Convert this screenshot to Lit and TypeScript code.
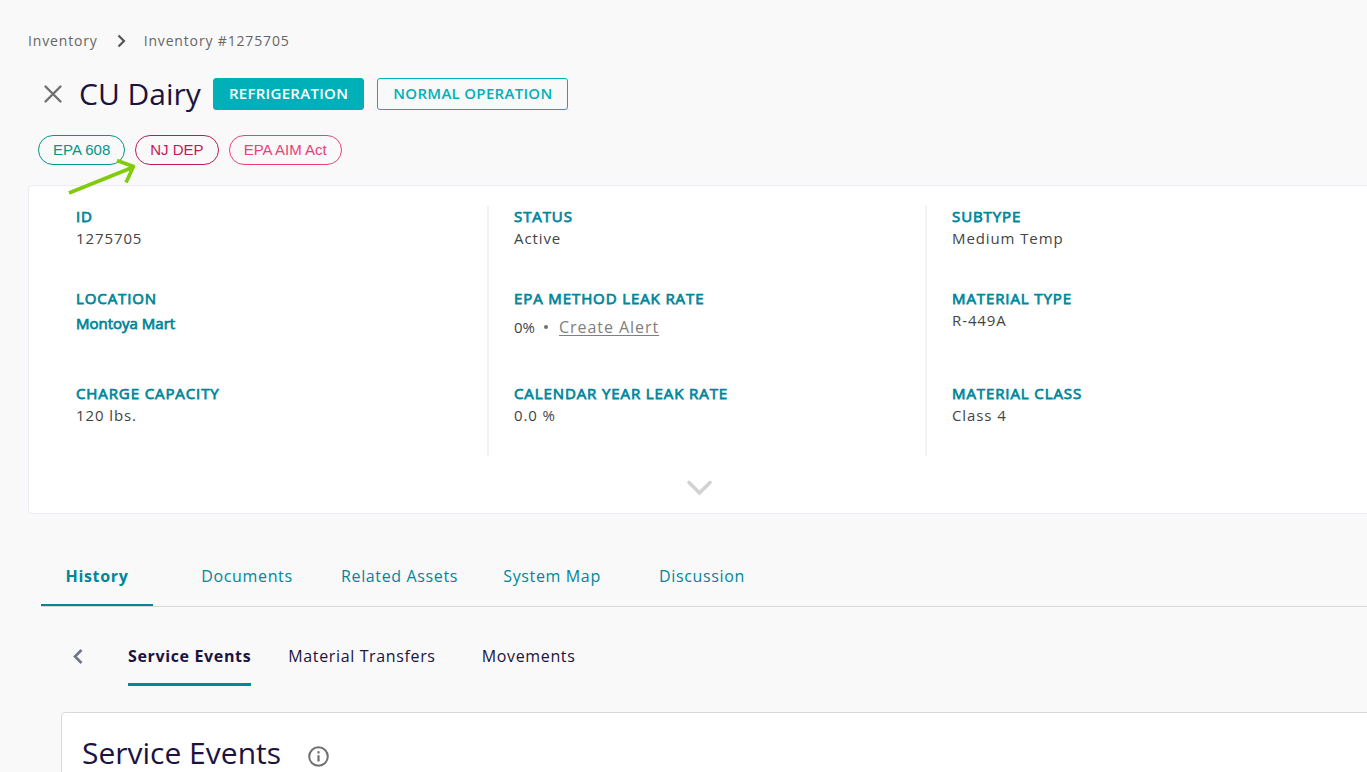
import { LitElement, html, css } from "lit";
import { customElement, state } from "lit/decorators.js";

interface Field {
  label: string;
  value: string;
  kind?: "link" | "rate";
}

const FIELDS: Field[] = [
  { label: "ID", value: "1275705" },
  { label: "STATUS", value: "Active" },
  { label: "SUBTYPE", value: "Medium Temp" },
  { label: "LOCATION", value: "Montoya Mart", kind: "link" },
  { label: "EPA METHOD LEAK RATE", value: "0%", kind: "rate" },
  { label: "MATERIAL TYPE", value: "R-449A" },
  { label: "CHARGE CAPACITY", value: "120 lbs." },
  { label: "CALENDAR YEAR LEAK RATE", value: "0.0 %" },
  { label: "MATERIAL CLASS", value: "Class 4" },
];

const TABS = ["History", "Documents", "Related Assets", "System Map", "Discussion"];
const SUBTABS = ["Service Events", "Material Transfers", "Movements"];

@customElement("asset-details")
class AssetDetails extends LitElement {
  static styles = css`
    :host {
      display: block;
      background: #fff;
      border: 1px solid #ebebf5;
      border-radius: 4px;
      padding: 20px 0 13px;
    }
    .grid {
      display: grid;
      grid-template-columns: repeat(3, 1fr);
      margin: 0;
      padding: 0 5px 0 22px;
    }
    .cell {
      padding: 0 24px 38px 25px;
      border-right: 2px solid #f2f2f2;
    }
    .cell:nth-child(3n) {
      border-right: 0;
    }
    .cell:nth-child(n + 7) {
      padding-bottom: 29px;
    }
    dt {
      font-size: 15px;
      line-height: 20px;
      letter-spacing: 0.06em;
      color: #00869b;
      -webkit-text-stroke: 0.05em currentColor;
    }
    dd {
      margin: 0;
      font-size: 15px;
      line-height: 24px;
      letter-spacing: 0.06em;
      color: #444;
    }
    .link {
      line-height: 30px;
      letter-spacing: 0;
    }
    .link a {
      color: #00869b;
      text-decoration: none;
      -webkit-text-stroke: 0.05em currentColor;
    }
    .rate {
      display: flex;
      align-items: center;
      padding-top: 1px;
      line-height: 36px;
      letter-spacing: 0;
    }
    .dot {
      width: 4px;
      height: 4px;
      margin: 0 11px 0 9px;
      border-radius: 50%;
      background: #6b7280;
    }
    .rate a {
      font-size: 16px;
      letter-spacing: 0.06em;
      color: #808080;
      text-underline-offset: 2px;
    }
    .expand {
      display: block;
      margin: 14px auto 0;
      padding: 0;
      border: 0;
      background: none;
      width: 36px;
      height: 30px;
    }
    .expand svg {
      display: block;
    }
  `;

  render() {
    return html`
      <dl class="grid">
        ${FIELDS.map(
          (f) => html`<div class="cell">
            <dt>${f.label}</dt>
            ${f.kind === "link"
              ? html`<dd class="link"><a href="#location">${f.value}</a></dd>`
              : f.kind === "rate"
                ? html`<dd class="rate">
                    <span>${f.value}</span><span class="dot"></span><a href="#alert">Create Alert</a>
                  </dd>`
                : html`<dd>${f.value}</dd>`}
          </div>`
        )}
      </dl>
      <button class="expand" aria-label="Show more details">
        <svg width="36" height="30" viewBox="0 0 36 30" fill="none" stroke="#d2d2d2" stroke-width="3.6" stroke-linecap="round">
          <path d="M7 12.500l10.500 10.500 10.500-10.500" />
        </svg>
      </button>
    `;
  }
}

@customElement("app-root")
class AppRoot extends LitElement {
  @state() private tab = TABS[0];
  @state() private subtab = SUBTABS[0];

  static styles = css`
    :host {
      display: block;
      height: 100vh;
      box-sizing: border-box;
      overflow: hidden;
      padding: 28px 0 0 28px;
      background: #f9f9f9;
      font-family: "Open Sans", "Noto Sans", sans-serif;
      color: #1b1340;
    }
    button {
      font-family: inherit;
      background: none;
      border: 0;
      padding: 0;
      color: inherit;
    }
    svg {
      display: block;
    }
    .crumbs {
      display: flex;
      align-items: center;
      font-size: 14px;
      line-height: 26px;
      letter-spacing: 0.06em;
      color: #666;
    }
    .crumbs a {
      color: inherit;
      text-decoration: none;
    }
    .crumbs svg {
      margin: 0 17px 0 18px;
    }
    .title {
      display: flex;
      align-items: center;
      margin-top: 20px;
      padding-left: 15px;
      height: 40px;
    }
    h1,
    h2 {
      margin: 0;
      font-size: 30px;
      line-height: 40px;
      font-weight: 400;
    }
    h1 {
      margin: 0 12px 0 16px;
    }
    .tag {
      box-sizing: border-box;
      height: 32px;
      padding: 0 15px;
      border: 1px solid #00b0b9;
      border-radius: 3px;
      font-size: 15px;
      line-height: 28px;
      font-weight: 600;
      letter-spacing: 0.02em;
      color: #00b0b9;
    }
    .solid {
      background: #00b0b9;
      color: #fff;
      margin-right: 13px;
    }
    .pills {
      position: relative;
      display: flex;
      gap: 10px;
      margin: 21px 0 20px 10px;
    }
    .pill {
      padding: 0 14px;
      border: 1px solid currentColor;
      border-radius: 15px;
      font-family: "Liberation Sans", Arial, sans-serif;
      font-size: 15px;
      line-height: 28px;
    }
    .green {
      color: #009688;
    }
    .crimson {
      color: #c2185b;
    }
    .pink {
      color: #ec407a;
    }
    .arrow {
      position: absolute;
      left: 28px;
      top: 20px;
    }
    asset-details {
      margin-right: -4px;
    }
    .tabs {
      display: flex;
      gap: 38px;
      margin: 32px 0 0 13px;
      border-bottom: 1px solid #d8d8d8;
    }
    .tab,
    .subtab {
      box-sizing: border-box;
      min-width: 112px;
      padding-top: 2px;
      font-size: 16px;
      letter-spacing: 0.04em;
      text-align: center;
    }
    .tab {
      height: 60px;
      border-bottom: 2px solid transparent;
      color: #00869b;
    }
    .tab.on {
      font-weight: 700;
      border-color: #00869b;
    }
    .subtabs {
      display: flex;
      align-items: center;
      gap: 37px;
      padding-left: 44px;
      margin-top: 20px;
    }
    .back {
      width: 19px;
    }
    .subtab {
      height: 59px;
      border-bottom: 3px solid transparent;
    }
    .subtab.on {
      font-weight: 700;
      border-color: #00869b;
    }
    .panel {
      display: flex;
      align-items: flex-start;
      gap: 26px;
      margin: 26px -4px 0 33px;
      padding: 20px;
      min-height: 200px;
      background: #fff;
      border: 1px solid #d8d8d8;
      border-radius: 4px;
    }
    .info {
      margin-top: 12px;
    }
  `;

  render() {
    return html`
      <nav class="crumbs" aria-label="Breadcrumb">
        <a href="#inventory">Inventory</a>
        <svg width="11" height="14" viewBox="0 0 11 14" fill="none" stroke="#555" stroke-width="2.2">
          <path d="M2.500 1.500L8 7l-5.500 5.500" />
        </svg>
        <span>Inventory #1275705</span>
      </nav>
      <header class="title">
        <button aria-label="Close">
          <svg width="20" height="20" viewBox="0 0 20 20" fill="none" stroke="#707070" stroke-width="2.4" stroke-linecap="round">
            <path d="M2.500 2.500l15 15M17.500 2.500l-15 15" />
          </svg>
        </button>
        <h1>CU Dairy</h1>
        <span class="tag solid">REFRIGERATION</span>
        <span class="tag">NORMAL OPERATION</span>
      </header>
      <div class="pills">
        <span class="pill green">EPA 608</span>
        <span class="pill crimson">NJ DEP</span>
        <span class="pill pink">EPA AIM Act</span>
        <svg class="arrow" width="76" height="44" viewBox="0 0 76 44" fill="none" stroke="#80cc0a" stroke-width="3.6" stroke-linejoin="round">
          <path d="M3 38L67.500 12M51 5.500l16.500 6-7.500 16" />
        </svg>
      </div>
      <asset-details></asset-details>
      <div class="tabs" role="tablist">
        ${TABS.map(
          (t) => html`<button
            role="tab"
            class="tab ${t === this.tab ? "on" : ""}"
            @click=${() => (this.tab = t)}
          >${t}</button>`
        )}
      </div>
      <div class="subtabs" role="tablist">
        <button class="back" aria-label="Back">
          <svg width="12" height="16" viewBox="0 0 12 16" fill="none" stroke="#6f7488" stroke-width="2.6">
            <path d="M9.500 1L3 7.500 9.500 14" />
          </svg>
        </button>
        ${SUBTABS.map(
          (t) => html`<button
            role="tab"
            class="subtab ${t === this.subtab ? "on" : ""}"
            @click=${() => (this.subtab = t)}
          >${t}</button>`
        )}
      </div>
      <section class="panel">
        <h2>Service Events</h2>
        <svg class="info" width="23" height="23" viewBox="0 0 23 23" fill="none" stroke="#707070" stroke-width="2">
          <circle cx="11.500" cy="11.500" r="9.300" />
          <path d="M11.500 10.300v6.200M11.500 6.300v2.200" stroke-width="2.200" />
        </svg>
      </section>
    `;
  }
}
